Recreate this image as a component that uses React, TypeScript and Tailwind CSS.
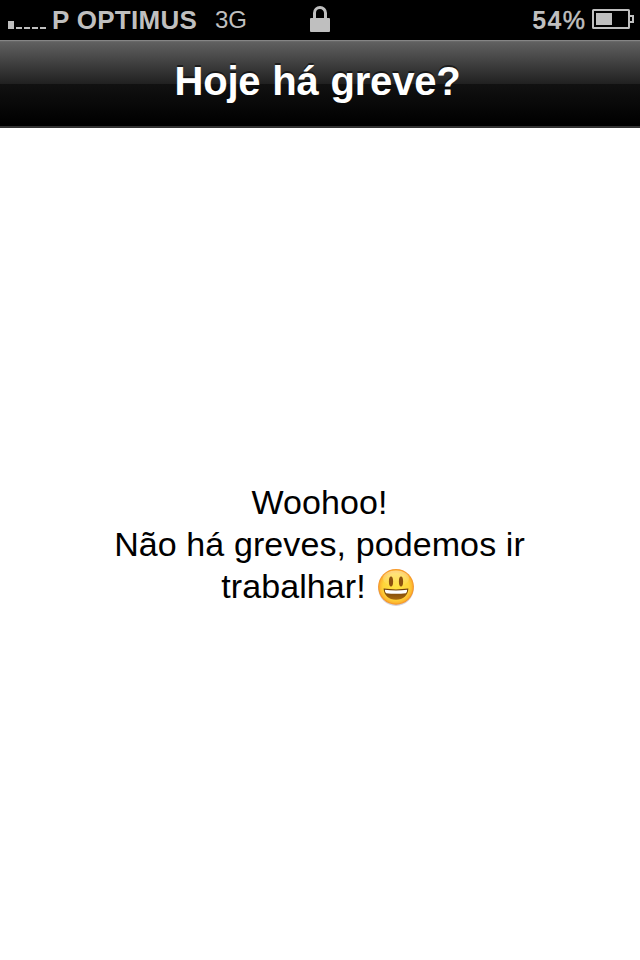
function SignalBars() {
  return (
    <div className="flex h-[29px] w-[38px] items-end gap-[2px]">
      <span className="h-2 w-1.5 bg-[#bfbfbf]" />
      <span className="h-0.5 w-1.5 bg-[#bfbfbf]" />
      <span className="h-0.5 w-1.5 bg-[#bfbfbf]" />
      <span className="h-0.5 w-1.5 bg-[#bfbfbf]" />
      <span className="h-0.5 w-1.5 bg-[#bfbfbf]" />
    </div>
  );
}

function LockIcon() {
  return (
    <svg className="mt-1.5 h-[26px] w-5" viewBox="0 0 20 26" fill="none">
      <path d="M4.5 13V7a5.5 5.5 0 0 1 11 0v6" stroke="#bfbfbf" strokeWidth="3" />
      <rect y="12" width="20" height="14" rx="1" fill="#bfbfbf" />
    </svg>
  );
}

function BatteryIcon() {
  return (
    <svg className="mt-[9px] h-5 w-[42px]" viewBox="0 0 42 20" fill="none">
      <rect x="1" y="1" width="36" height="18" rx="0.5" stroke="#bfbfbf" strokeWidth="2" />
      <path d="M38 7h3v6h-3" stroke="#bfbfbf" strokeWidth="2" />
      <rect x="4" y="4" width="16" height="12" fill="#bfbfbf" />
    </svg>
  );
}

function Smiley() {
  return (
    <svg className="mt-px ml-[10px] h-10 w-10" viewBox="0 0 40 40">
      <defs>
        <radialGradient id="face" cx="0.5" cy="0.5" r="0.52">
          <stop offset="0" stopColor="#ffe340" />
          <stop offset="0.7" stopColor="#ffd43a" />
          <stop offset="0.86" stopColor="#fdb830" />
          <stop offset="1" stopColor="#f07c1e" />
        </radialGradient>
        <linearGradient id="shine" x1="0" y1="0" x2="0" y2="1">
          <stop offset="0" stopColor="#fff" stopOpacity="0.4" />
          <stop offset="1" stopColor="#fff" stopOpacity="0" />
        </linearGradient>
        <linearGradient id="mouth" x1="0" y1="0" x2="0" y2="1">
          <stop offset="0" stopColor="#6e3c08" />
          <stop offset="1" stopColor="#a8690e" />
        </linearGradient>
      </defs>
      <ellipse cx="20" cy="21.3" rx="17.8" ry="17.6" fill="#5b4c60" opacity="0.25" />
      <circle cx="20" cy="19.8" r="17.9" fill="url(#face)" />
      <ellipse cx="20" cy="11.5" rx="13" ry="8" fill="url(#shine)" />
      <ellipse cx="15" cy="14.6" rx="2.1" ry="5" fill="#8d5210" />
      <ellipse cx="25" cy="14.6" rx="2.1" ry="5" fill="#8d5210" />
      <path d="M7.6 21.6q12.4 1.6 24.8 0C32 28.6 27.4 32.8 20 32.8S8 28.6 7.6 21.6Z" fill="url(#mouth)" />
      <path d="M8.8 22.8q11.2 1.5 22.4 0 0 2.1-1.3 3.4-9.9 1-19.8 0-1.3-1.3-1.3-3.4Z" fill="#fff" />
    </svg>
  );
}

export default function App() {
  return (
    <div className="flex h-[960px] w-[640px] flex-col overflow-hidden bg-white font-['Liberation_Sans',Arial,sans-serif]">
      <header className="grid h-10 grid-cols-[310px_20px_310px] bg-black text-[#bfbfbf]">
        <div className="flex pl-2">
          <SignalBars />
          <span className="ml-1.5 w-[163px] whitespace-nowrap text-[26px] leading-10 font-bold tracking-[0.3px]">P OPTIMUS</span>
          <span className="text-[24px] leading-10 tracking-[-0.2px]">3G</span>
        </div>
        <LockIcon />
        <div className="flex justify-end pr-1.5">
          <span className="mr-[7px] text-[25px] leading-10 font-bold tracking-[1.4px]">
            54<span className="font-normal tracking-normal [-webkit-text-stroke:0.5px_#bfbfbf]">%</span>
          </span>
          <BatteryIcon />
        </div>
      </header>
      <div className="h-[88px] border-t border-b-2 border-t-[#858585] border-b-[#333] bg-[linear-gradient(#707070_0px,#606060_1px,#202020_43px,#111_43px,#000_83px)] text-center">
        <h1 className="mr-[5px] text-[40px] leading-[81px] font-bold tracking-[-0.2px] [word-spacing:1px] text-white [text-shadow:0_-2px_0_rgba(0,0,0,0.5)]">Hoje há greve?</h1>
      </div>
      <main className="flex flex-col items-center pt-[353px] text-[34px] leading-[42px] tracking-[0.1px] text-black">
        <p className="mr-px">Woohoo!</p>
        <p className="mr-px">Não há greves, podemos ir</p>
        <p className="mr-[3px] flex items-center">trabalhar!<Smiley /></p>
      </main>
    </div>
  );
}
